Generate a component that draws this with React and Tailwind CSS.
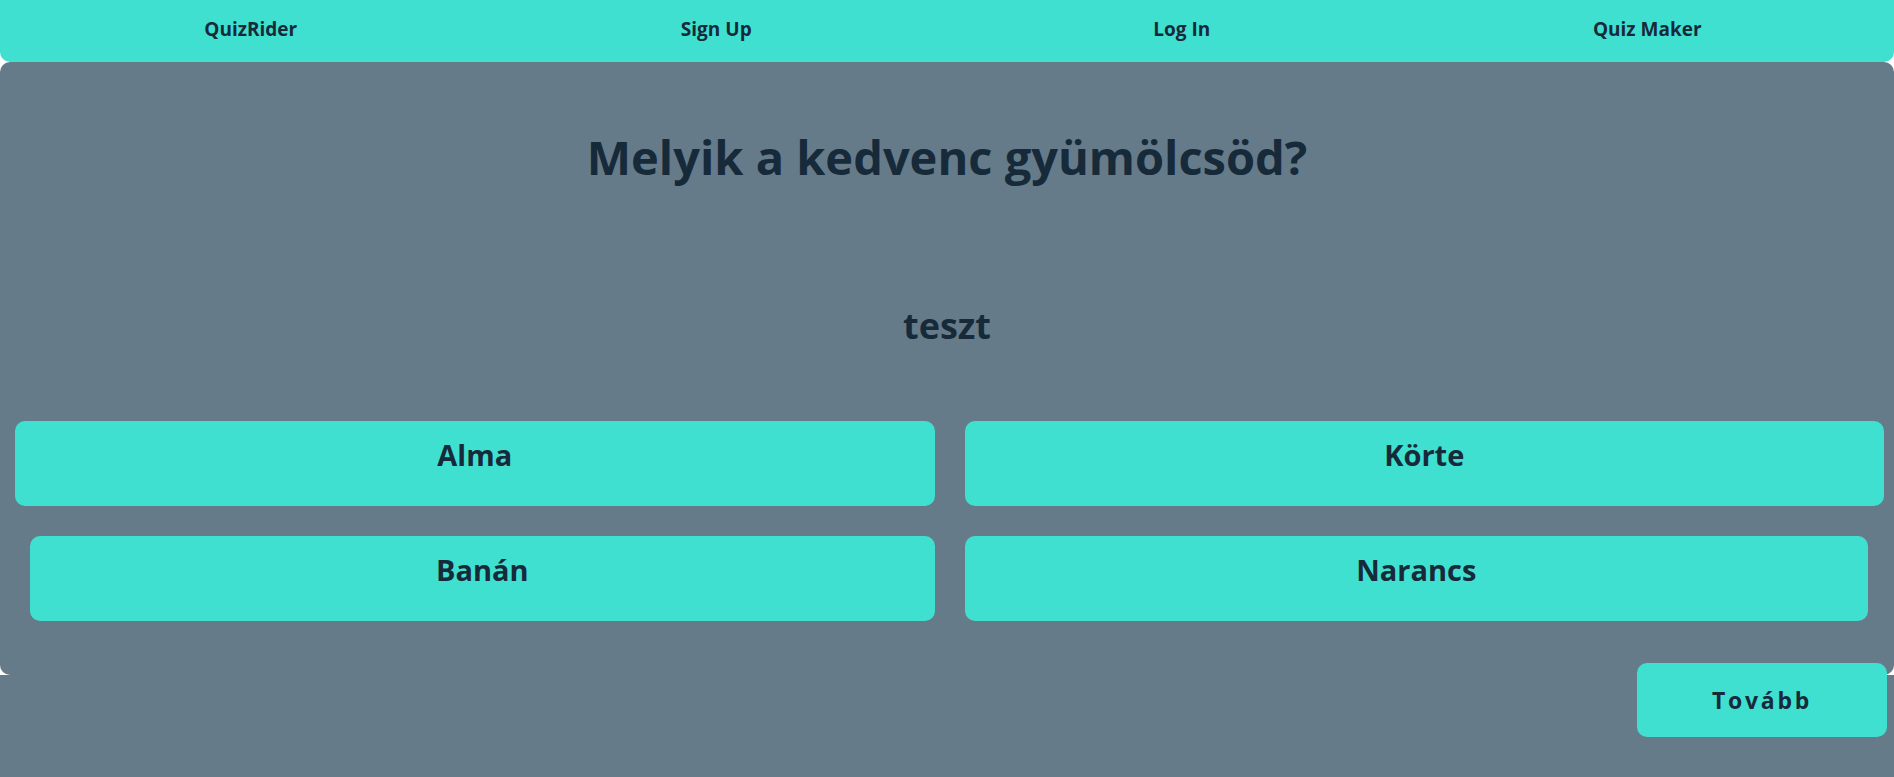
const navItems = ['QuizRider', 'Sign Up', 'Log In', 'Quiz Maker'];

const answers = [
  { label: 'Alma', cls: 'ml-0 mr-0' },
  { label: 'Körte', cls: 'ml-0 mr-0' },
  { label: 'Banán', cls: 'ml-[15px] mr-0' },
  { label: 'Narancs', cls: 'ml-0 mr-[16px]' },
];

export default function App() {
  return (
    <div className="h-screen flex flex-col bg-white text-[#172a3a] font-['Open_Sans',sans-serif]">
      <nav className="h-[62px] shrink-0 bg-[#40e0d0] rounded-b-[10px] grid grid-cols-4 items-center pl-[18px] pr-[14px] pb-[3px]">
        {navItems.map((item) => (
          <a key={item} href="#" className="text-center text-[19px] font-bold">
            {item}
          </a>
        ))}
      </nav>

      <main className="shrink-0 bg-[#667b89] rounded-[10px] pt-[66px] pb-[54px]">
        <h1 className="text-center text-[47px] leading-[58px] font-bold">Melyik a kedvenc gyümölcsöd?</h1>
        <h2 className="mt-[120px] text-center text-[36px] leading-[40px] font-bold">teszt</h2>

        <div className="mt-[75px] grid grid-cols-2 gap-x-[30px] gap-y-[30px] pl-[15px] pr-[10px]">
          {answers.map(({ label, cls }) => (
            <button
              key={label}
              className={`${cls} h-[85px] rounded-[10px] bg-[#40e0d0] text-[29px] font-bold pb-[17px]`}
            >
              {label}
            </button>
          ))}
        </div>
      </main>

      <div className="flex-1 bg-[#667b89] flex justify-end items-start pr-[7px]">
        <button className="relative -mt-[12px] w-[250px] h-[74px] rounded-[10px] bg-[#40e0d0] text-[23px] font-bold tracking-[0.12em]">
          Tovább
        </button>
      </div>
    </div>
  );
}
